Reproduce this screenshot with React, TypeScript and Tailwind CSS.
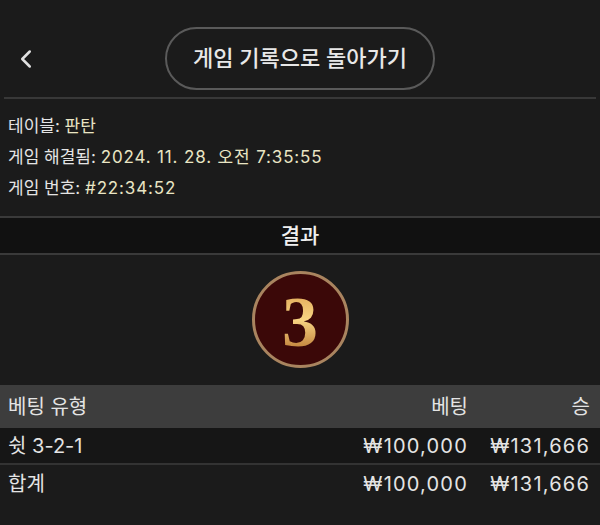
import { ChevronLeft } from 'lucide-react';

const rows = [
  { type: '쉿 3-2-1', bet: '₩100,000', win: '₩131,666' },
];

const App = () => {
  return (
    <div className="min-h-[525px] w-[600px] bg-[#1b1b1b] text-[#e4e4e4] font-['Inter','Noto_Sans_CJK_KR',sans-serif]">
      <div className="grid grid-cols-[1fr_auto_1fr] items-center pt-[27px] pb-[7px]">
        <div className="pl-[11px]">
          <ChevronLeft className="h-[30px] w-[30px] text-[#e0e0e0]" strokeWidth={2} />
        </div>
        <button className="h-[63px] w-[270px] rounded-full border-2 border-[#5a5a5a] text-[22px] font-medium text-[#e8e8e8]">
          게임 기록으로 돌아가기
        </button>
        <div />
      </div>
      <div className="mx-[4px] h-[2px] bg-[#383838]" />

      <div className="px-[8px] pt-[12px] pb-[12px] text-[17px] leading-[31px]">
        <p>테이블: <span className="text-[#e9e5c4]">판탄</span></p>
        <p>게임 해결됨: <span className="tracking-[0.05em] text-[#e9e5c4]">2024. 11. 28. 오전 7:35:55</span></p>
        <p>게임 번호: <span className="tracking-[0.05em] text-[#e9e5c4]">#22:34:52</span></p>
      </div>

      <div className="border-y-2 border-[#3a3a3a] bg-[#111111] h-[39px] flex items-center justify-center text-[21px] font-medium text-[#f0f0f0]">
        결과
      </div>

      <div className="flex justify-center pt-[16px] pb-[17px]">
        <div className="flex h-[97px] w-[97px] items-center justify-center rounded-full border-[3px] border-[#a9845f] bg-[#3b0808]">
          <span className="bg-gradient-to-b from-[#d89a48] via-[#f7d483] to-[#b06a22] bg-clip-text pt-[4px] font-['Liberation_Serif',serif] text-[72px] font-bold leading-none text-transparent">
            3
          </span>
        </div>
      </div>

      <div className="text-[20px]">
        <div className="flex h-[43px] items-center bg-[#3d3d3d] pl-[8px] pr-[10px]">
          <span className="flex-1">베팅 유형</span>
          <span className="text-right">베팅</span>
          <span className="w-[122px] text-right">승</span>
        </div>
        {rows.map((r) => (
          <div key={r.type} className="flex h-[37px] items-center border-b-2 border-[#333333] bg-[#161616] pl-[8px] pr-[10px]">
            <span className="flex-1">{r.type}</span>
            <span className="text-right tracking-[0.06em]">{r.bet}</span>
            <span className="w-[122px] text-right tracking-[0.06em]">{r.win}</span>
          </div>
        ))}
        <div className="flex h-[38px] items-center pl-[8px] pr-[10px]">
          <span className="flex-1">합계</span>
          <span className="text-right tracking-[0.06em]">₩100,000</span>
          <span className="w-[122px] text-right tracking-[0.06em]">₩131,666</span>
        </div>
      </div>
    </div>
  );
};

export default App;
